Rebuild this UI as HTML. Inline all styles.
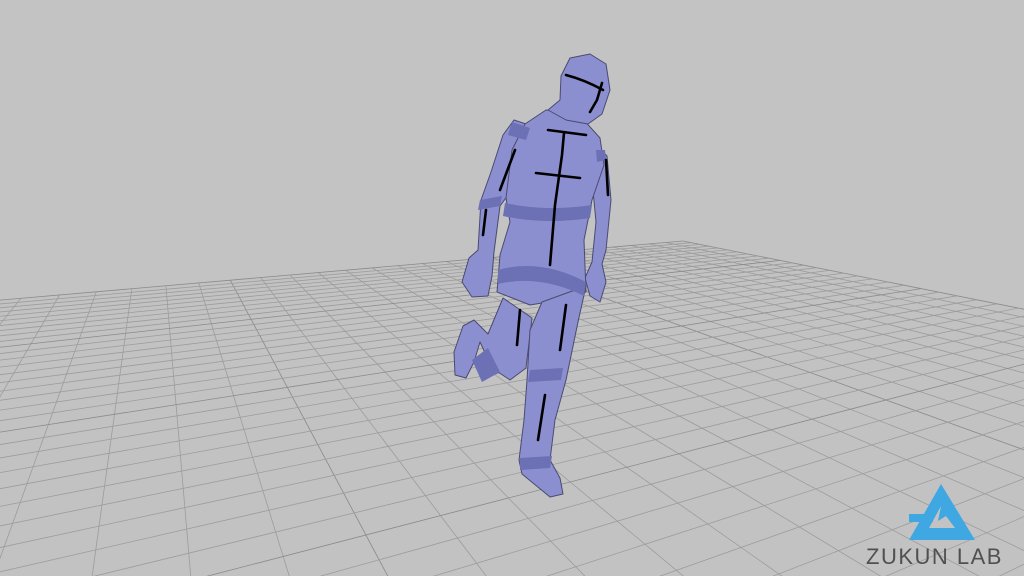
<!DOCTYPE html>
<html><head><style>
html,body{margin:0;padding:0;width:1024px;height:576px;overflow:hidden;background:#c3c3c3}
svg{position:absolute;left:0;top:0}
.logo{position:absolute;left:866px;top:544px;font:22px/26px "Liberation Sans",sans-serif;color:#505050;letter-spacing:1.5px}
</style></head><body>
<svg id="g" width="1024" height="576" viewBox="0 0 1024 576">
<polygon id="floor" fill="#c2c2c2"/>
<g id="lines" stroke="#9c9c9c" stroke-width="0.8" fill="none"></g>
<g stroke="#4a4a70" stroke-width="1" fill="#8c8fcf" stroke-linejoin="round">
<path d="M503 298 L532 318 L526 368 L510 380 L492 368 L480 342 L474 362 L466 378 L455 375 L454 352 L463 326 L474 320 L488 334 Z"/>
<path d="M594 143 L607 156 L611 200 L606 250 L602 264 L606 282 L600 302 L590 296 L585 278 L592 262 L596 222 L592 180 Z"/>
<path d="M514 120 L538 128 L522 176 L500 206 L494 252 L492 276 L488 296 L472 297 L462 282 L469 258 L478 250 L481 200 L491 172 L503 135 Z"/>
<path d="M546 110 L566 112 L582 118 L600 138 L604 165 L592 200 L584 240 L586 292 L560 300 L530 305 L497 292 L500 255 L510 222 L506 198 L512 150 L525 124 Z"/>
<path d="M542 302 L586 286 L578 322 L566 380 L555 420 L550 460 L560 478 L563 494 L550 497 L522 474 L519 460 L524 420 L527 380 L530 330 Z"/>
<path d="M548 110 L560 100 L561 76 L570 58 L590 54 L606 64 L610 90 L602 114 L588 124 L566 120 Z"/>
</g>
<g fill="#6c70b4">
<path d="M512 122 L530 128 L526 140 L508 135 Z"/>
<path d="M480 200 L502 196 L500 206 L478 210 Z"/>
<path d="M596 150 L605 150 L606 160 L597 162 Z"/>
<path d="M505 203 Q545 212 592 205 L590 218 Q545 225 503 216 Z"/>
<path d="M498 270 Q540 258 586 282 L584 296 Q540 274 498 284 Z"/>
<path d="M530 370 L563 368 L561 380 L528 382 Z"/>
<path d="M472 360 L488 348 L500 372 L482 382 Z"/>
<path d="M520 458 L552 456 L550 468 L520 470 Z"/>
</g>
<g stroke="#000" stroke-width="2.6" fill="none" stroke-linecap="round">
<path d="M548 130 L586 135"/><path d="M564 133 L562 155 L555 205 L550 265"/>
<path d="M536 173 L580 178"/>
<path d="M566 75 Q585 80 603 90"/><path d="M602 83 L597 100 L590 112"/>
<path d="M515 150 L500 190"/><path d="M606 160 L608 195"/>
<path d="M486 210 L483 235"/>
<path d="M520 310 L517 345"/><path d="M566 305 L560 350"/>
<path d="M545 395 L538 440"/>
</g>
<g>
<polygon points="941,484 909,540 975,540" fill="#3fa7e2"/>
<polygon points="941,506 929,528 955,528 946,516 938,521" fill="#c3c3c3"/>
<rect x="909" y="514" width="24" height="8" fill="#3fa7e2"/>
</g>
</svg>
<div class="logo">ZUKUN LAB</div>
<script>
(function(){
var Cx=683,Cy=241,Ax=1907,Ay=135,Bx=153,By=135,al=0.0135,be=0.0155;
function P(s,u){var t=al*s,w=be*u,d=1-t-w;return [(Cx-Ax*t-Bx*w)/d,(Cy-Ay*t-By*w)/d];}
var g=document.getElementById('lines'),h='',lim=0.9,S=Math.floor(lim/al),U=Math.floor(lim/be);
for(var s=0;s<=S;s++){var um=(lim-al*s)/be;if(um<=0)continue;var a=P(s,0),b=P(s,um);
h+='<line x1="'+a[0].toFixed(1)+'" y1="'+a[1].toFixed(1)+'" x2="'+b[0].toFixed(1)+'" y2="'+b[1].toFixed(1)+'"'+(s%10==0?' stroke="#8a8a8a"':'')+'/>';}
for(var u=0;u<=U;u++){var sm=(lim-be*u)/al;if(sm<=0)continue;var a=P(0,u),b=P(sm,u);
h+='<line x1="'+a[0].toFixed(1)+'" y1="'+a[1].toFixed(1)+'" x2="'+b[0].toFixed(1)+'" y2="'+b[1].toFixed(1)+'"'+(u%10==0?' stroke="#8a8a8a"':'')+'/>';}
g.innerHTML=h;
var f=[P(0,0),P(lim/al,0),P(0,lim/be)];
document.getElementById('floor').setAttribute('points',f.map(function(p){return p[0].toFixed(1)+','+p[1].toFixed(1)}).join(' '));
})();
</script>
</body></html>
